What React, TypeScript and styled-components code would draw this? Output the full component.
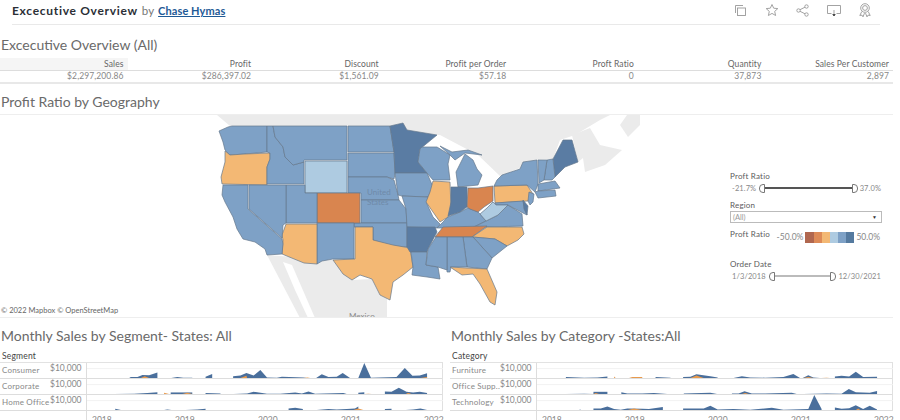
import React from "react";
import styled, { createGlobalStyle } from "styled-components";

const Global = createGlobalStyle`
  html, body { margin: 0; padding: 0; background: #fff; }
  body { font-family: "Lato", "Liberation Sans", sans-serif; color: #666; }
`;
const Page = styled.div`width: 900px; height: 420px; overflow: hidden; position: relative;`;
const Header = styled.header`
  height: 24px; margin: 0 20px 0 12px; border-bottom: 1px solid #e9e9e9;
  display: flex; align-items: center; justify-content: space-between;
`;
const Byline = styled.div`font-size: 11.5px; color: #777; display: flex; gap: 4px; align-items: baseline; padding-bottom: 3px;`;
const Name = styled.strong`font-size: 12px; color: #2b2f36; font-weight: 700; letter-spacing: 0.7px;`;
const Author = styled.a`color: #1f5a96; text-decoration: underline; font-weight: 700; font-size: 11px; letter-spacing: 0.1px;`;
const Tools = styled.div`display: flex; gap: 15px; padding-right: 7px; padding-bottom: 4px;`;
const Body = styled.main`width: 893px;`;
const Title = styled.h2`
  margin: 0; font-size: 14px; line-height: 19px; font-weight: 400; color: #6a6a6a; padding-left: 1px;
`;
const OverviewTitle = styled(Title)`padding-top: 10px; padding-bottom: 4px;`;
const GeoTitle = styled(Title)`padding-top: 8px; padding-bottom: 3px; border-bottom: 1px solid #eee;`;
const Metrics = styled.div`
  display: grid; grid-template-columns: repeat(7, 1fr); font-size: 8.5px; line-height: 11px; text-align: right;
  letter-spacing: 0.1px;
`;
const MetricHead = styled.div`
  padding-right: 4px; height: 12px; line-height: 13px; color: #666; border-bottom: 1px solid #ddd;
  background: ${(p: { $shade?: boolean }) => (p.$shade ? "#f5f5f5" : "#fff")};
`;
const MetricValue = styled.div`padding-right: 4px; height: 11px; color: #888; border-bottom: 2px solid #e8e8e8;`;
const MapPanel = styled.section`
  height: 202px; display: flex; position: relative; border-bottom: 1px solid #eee;
`;
const MapSvg = styled.svg`width: 725px; height: 202px; display: block; flex: none;`;
const Attribution = styled.div`position: absolute; left: 1px; bottom: 1px; font-size: 7.5px; line-height: 10px; color: #666;`;
const Legend = styled.aside`
  flex: 1; padding: 56px 11px 0 5px; display: flex; flex-direction: column; font-size: 8.5px; color: #666; line-height: 11px;
`;
const LegendLabel = styled.div`color: #5c5c5c; font-size: 8px; letter-spacing: 0.2px;`;
const SliderRow = styled.div`
  display: flex; align-items: center; justify-content: space-between; height: 12px; color: #888; margin-bottom: 6px;
  padding: 0 1px 0 2px; font-size: 7.5px; letter-spacing: 0.1px;
`;
const Track = styled.div`
  flex: 1; position: relative; height: 2px;
  background: ${(p: { $dark?: boolean }) => (p.$dark ? "#555" : "#bbb")}; margin: 0 8px 0 9px;
`;
const Thumb = styled.span`
  position: absolute; top: -3px; width: 4px; height: 7px; background: #fff; border: 1px solid #777;
  ${(p: { $end?: boolean }) => (p.$end
    ? "right: -6px; border-radius: 0 4px 4px 0;"
    : "left: -6px; border-radius: 4px 0 0 4px;")}
`;
const Select = styled.div`
  height: 10px; border: 1px solid #bbb; padding: 0 4px 0 2px; margin: 0 0 6px 0; color: #999; display: flex;
  align-items: center; justify-content: space-between; font-size: 7.5px;
`;
const Caret = styled.span`font-size: 5px; color: #333;`;
const RampRow = styled.div`display: flex; align-items: center; height: 17px; margin-bottom: 13px; padding-right: 2px; color: #888;`;
const RampLabel = styled(LegendLabel)`flex: 1; align-self: flex-start;`;
const Ramp = styled.div`display: flex; width: 49px; height: 11px; margin: 0 2px;`;
const RampCell = styled.span`flex: 1; background: ${(p: { $c: string }) => p.$c};`;
const ChartGrid = styled.div`display: grid; grid-template-columns: 443px 443px; column-gap: 7px; padding-top: 8px;`;
const ChartPanel = styled.section`display: flex; flex-direction: column;`;
const ChartTitle = styled(Title)`padding-bottom: 6px;`;
const FieldLabel = styled.div`font-size: 8.5px; line-height: 11px; color: #444; padding-left: 2px; height: 11px; letter-spacing: 0.2px;`;
const Rows = styled.div`border-top: 1px solid #e2e2e2; border-right: 1px solid #e0e0e0;`;
const Row = styled.div`
  display: grid; grid-template-columns: 50px 36px 1fr; height: 16px; border-bottom: 1px solid #ddd; box-sizing: border-box;
  font-size: 8px; color: #888; line-height: 15px; letter-spacing: 0.2px;
`;
const RowLabel = styled.div`padding-left: 2px; white-space: nowrap; overflow: hidden;`;
const RowAxis = styled.div`text-align: right; padding-right: 5px; font-size: 8.5px; line-height: 11px; letter-spacing: 0;`;
const Plot = styled.svg`width: 357px; height: 15px; display: block; border-left: 1px solid #ddd; box-sizing: border-box;`;
const Years = styled.div`
  display: flex; margin-left: 86px; border-left: 1px solid #ddd; padding: 4px 0 0 5px; font-size: 8.5px; color: #888; line-height: 11px;
`;
const Year = styled.span`flex: none; width: 83px;`;

type Pt = [number, number];
type Series = { blue: Pt[][]; orange: Pt[][] };

const path = (pts: Pt[], base: number) => pts.map(([x, h]) => `${x},${base - h}`).join(" ");

const AreaRow: React.FC<{ label: string; data: Series }> = ({ label, data }) => (
  <Row>
    <RowLabel>{label}</RowLabel>
    <RowAxis>$10,000</RowAxis>
    <Plot viewBox="258 0 1072 48" preserveAspectRatio="none">
      <line x1="258" x2="1330" y1="18" y2="18" stroke="#f2f2f2" strokeWidth="3" />
      {data.blue.map((s, i) => <polygon key={i} points={path(s, 48)} fill="#4a6f9c" />)}
      {data.orange.map((s, i) => <polygon key={i} points={path(s, 48)} fill="#e89a4d" />)}
    </Plot>
  </Row>
);

const Axis = () => (
  <Years>{["2018", "2019", "2020", "2021", "2022"].map((y) => <Year key={y}>{y}</Year>)}</Years>
);

const seg1: Series = {
  blue: [
    [[385,0],[390,3],[410,3],[425,10],[445,9],[470,18],[470,0]],
    [[512,0],[530,3],[548,1],[575,1],[575,0]],
    [[615,0],[615,4],[635,13],[635,0]],
    [[698,0],[698,6],[720,8],[738,16],[760,8],[780,26],[800,2],[830,1],[845,4],[910,2],[920,0]],
    [[948,0],[965,12],[985,3],[1010,4],[1028,16],[1050,0]],
    [[1075,0],[1093,48],[1113,1],[1190,3],[1215,32],[1238,7],[1260,8],[1282,15],[1282,0]],
  ],
  orange: [[[420,0],[432,6],[445,0]],[[720,0],[738,7],[740,0]],[[910,0],[922,2],[930,0]],[[1262,0],[1282,3],[1282,0]]],
};
const seg2: Series = {
  blue: [
    [[340,0],[400,1],[440,3],[470,6],[470,0]],
    [[510,0],[510,5],[575,5],[575,0]],
    [[615,0],[615,3],[660,2],[660,0]],
    [[700,0],[740,2],[760,7],[800,1],[840,1],[885,5],[905,2],[925,8],[945,1],[1030,3],[1040,0]],
    [[1075,0],[1075,4],[1093,6],[1093,0]],
    [[1155,0],[1155,8],[1175,7],[1197,20],[1220,7],[1240,5],[1260,7],[1282,3],[1282,0]],
  ],
  orange: [[[490,0],[490,4],[505,0]],[[545,0],[560,4],[575,0]],[[1095,0],[1105,1],[1115,0]],[[1218,0],[1225,4],[1235,0]]],
};
const seg3: Series = {
  blue: [
    [[343,0],[343,4],[360,0]],
    [[490,0],[500,2],[512,0]],
    [[555,0],[590,2],[615,4],[615,0]],
    [[865,0],[865,5],[885,7],[908,3],[908,0]],
    [[950,0],[985,3],[1010,2],[1040,3],[1065,5],[1075,11],[1075,0]],
    [[1155,0],[1155,3],[1175,4],[1175,0]],
    [[1218,0],[1240,2],[1262,5],[1282,0]],
  ],
  orange: [[[1060,0],[1075,5],[1090,0]]],
};
const cat1: Series = {
  blue: [
    [[345,0],[345,3],[400,1],[440,2],[470,5],[470,0]],
    [[615,0],[615,3],[660,1],[660,0]],
    [[698,0],[698,3],[720,4],[738,12],[780,6],[802,2],[802,0]],
    [[850,0],[875,6],[900,2],[945,1],[1000,3],[1030,13],[1050,0]],
    [[1058,0],[1075,9],[1090,2],[1110,0]],
    [[1155,0],[1155,5],[1175,7],[1198,5],[1218,20],[1240,3],[1282,4],[1282,0]],
  ],
  orange: [[[490,0],[490,5],[495,0]],[[535,0],[545,3],[575,3],[575,0]],[[720,0],[738,8],[760,0]],[[1060,0],[1075,3],[1090,0]],[[1115,0],[1130,1],[1140,0]]],
};
const cat2: Series = {
  blue: [
    [[345,0],[400,1],[428,0]],
    [[428,0],[428,7],[470,7],[470,0]],
    [[512,0],[512,6],[530,2],[575,2],[610,3],[650,0]],
    [[700,0],[700,2],[780,4],[800,0]],
    [[845,0],[845,2],[865,2],[883,9],[905,2],[945,2],[1025,4],[1040,0]],
    [[1060,0],[1130,2],[1175,1],[1197,16],[1218,6],[1260,4],[1282,10],[1282,0]],
  ],
  orange: [[[428,0],[435,3],[445,0]],[[875,0],[885,3],[895,0]]],
};
const cat3: Series = {
  blue: [
    [[385,0],[388,2],[390,0]],
    [[428,0],[428,5],[450,5],[470,11],[490,3],[510,1],[530,5],[575,4],[595,3],[637,10],[637,0]],
    [[698,0],[698,5],[760,5],[780,14],[802,2],[850,3],[900,1],[965,7],[1000,1],[1075,3],[1093,48],[1115,3],[1115,0]],
    [[1155,0],[1155,8],[1175,4],[1198,6],[1218,15],[1240,3],[1260,14],[1282,2],[1282,0]],
  ],
  orange: [[[532,0],[550,5],[575,0]],[[1218,0],[1225,5],[1232,0]]],
};

const BLUE = "#7ea1c6", DARK = "#5a7ca3", PALE = "#aecbe1", SAND = "#f3b874", RUST = "#d9854f";

const states: [string, string][] = [
  ["WA", "219,131 228,127 232,126 267,126 267,152 245,154 230,155 225,150 223,142"],
  ["OR", "225,151 230,155 245,154 270,153 270,159 267,167 267,185 222,184 221,177 225,162"],
  ["ID", "267,126 273,126 275,137 283,147 285,157 293,165 304,162 304,184 267,184 267,167 270,159 270,153 267,152"],
  ["MT", "273,126 347,126 347,160 304,160 304,162 293,165 285,157 283,147 275,137"],
  ["WY", "305,161 347,161 347,193 305,193"],
  ["ND", "348,126 390,126 394,152 348,152"],
  ["SD", "348,153 394,153 395,174 394,179 387,177 348,177"],
  ["NE", "348,177 387,177 394,180 398,195 399,200 361,200 361,193 348,193"],
  ["KS", "361,200 399,200 406,209 407,223 361,223"],
  ["OK", "354,223 407,223 407,247 393,246 373,240 373,227 354,227"],
  ["CO", "317,193 360,193 360,223 317,223"],
  ["NM", "317,223 354,223 354,259 333,259 322,261 317,264"],
  ["AZ", "286,224 317,224 317,264 304,263 282,254 283,240 282,235"],
  ["UT", "286,185 305,185 305,193 317,193 317,223 286,223"],
  ["NV", "249,185 286,185 286,223 283,225 282,238 249,209"],
  ["CA", "223,185 248,185 248,209 282,239 283,244 282,254 267,255 265,249 255,242 243,239 237,229 233,217 225,202 222,195"],
  ["TX", "355,227 373,227 373,240 393,245 410,248 413,267 403,275 393,282 390,300 380,295 372,279 360,275 352,280 343,274 333,260 355,259"],
  ["MN", "390,126 403,123 407,130 437,135 420,149 418,162 427,173 395,173 394,152"],
  ["IA", "395,173 427,173 433,187 428,197 402,196 398,195"],
  ["MO", "402,196 428,197 427,204 433,217 440,224 437,228 407,227 406,209"],
  ["AR", "407,227 435,227 437,232 428,249 427,252 410,252 407,247"],
  ["LA", "411,252 427,252 426,265 438,267 440,279 427,277 412,275 413,267"],
  ["WI", "422,147 437,147 450,155 448,164 450,180 433,180 427,173 418,162 420,149"],
  ["IL", "433,181 450,182 451,209 448,217 440,222 433,212 426,202 430,192"],
  ["MI", "458,187 456,172 465,154 473,160 477,169 482,175 478,185"],
  ["UP", "440,146 452,152 468,150 482,155 465,153 455,160 450,155"],
  ["KY", "437,228 448,217 460,212 468,208 478,212 481,215 486,221 472,228"],
  ["IN", "451,187 467,187 467,207 460,212 448,216 451,202"],
  ["OH", "468,188 478,188 493,186 493,201 484,207 478,212 470,209 467,207"],
  ["PA", "494,186 527,185 533,194 528,201 495,203"],
  ["NY", "502,175 520,169 523,162 537,160 538,184 535,192 527,185 494,186 497,180"],
  ["ME", "553,159 563,140 572,140 578,162 565,167 555,177"],
  ["NH", "547,160 553,159 555,177 552,180 544,180"],
  ["VT", "538,160 547,160 544,180 539,183"],
  ["MA", "538,184 555,181 560,188 538,191"],
  ["CT", "535,192 538,191 555,190 556,196 538,198"],
  ["NJ", "529,192 534,194 533,202 530,205 528,201"],
  ["VA", "472,228 486,221 498,215 508,205 522,214 523,226 487,227"],
  ["MD", "495,203 523,201 527,215 521,212 508,205 496,205"],
  ["DE", "523,200 528,206 527,215 524,209"],
  ["WV", "480,214 487,208 493,202 496,205 508,205 498,215 486,221"],
  ["TN", "435,237 443,227 487,226 472,237"],
  ["NC", "487,227 522,227 524,234 518,240 507,246 495,239 472,237"],
  ["SC", "473,237 495,239 507,246 492,258 482,247"],
  ["GA", "463,237 473,237 482,247 492,258 487,269 467,267"],
  ["AL", "447,237 463,237 467,267 451,267 450,272 447,272"],
  ["MS", "436,237 447,237 447,270 438,267 426,265 428,249"],
  ["FL", "450,267 467,268 487,269 497,292 495,305 490,302 480,284 473,274 462,275"],
];

const fillFor: Record<string, string> = {
  OR: SAND, AZ: SAND, TX: SAND, IL: SAND, PA: SAND, NC: SAND, FL: SAND,
  CO: RUST, OH: RUST, TN: RUST,
  WY: PALE, WV: PALE,
  MN: DARK, AR: DARK, IN: DARK, ME: DARK, DE: DARK,
};

const LAND = "#ebebeb";
const USMap = () => (
  <MapSvg viewBox="0 115 725 202">
    <polygon fill={LAND} points="217,115 610,115 600,120 575,135 560,140 553,159 537,160 520,168 500,176 478,155 440,135 437,135 407,130 403,123 390,126 230,126" />
    <polygon fill={LAND} points="572,135 590,128 600,145 622,150 605,165 585,172 583,158 578,162" />
    <polygon fill={LAND} points="627,115 640,115 640,125 628,137 620,125" />
    <polygon fill={LAND} points="267,255 333,260 352,280 372,279 380,295 387,299 387,318 300,318" />
    <polygon fill="#fff" points="283,262 292,265 305,295 315,318 308,318 295,290" />
    {states.map(([id, pts]) => (
      <polygon key={id} points={pts} fill={fillFor[id] ?? BLUE} stroke="#66788c" strokeWidth="0.7" strokeLinejoin="round" />
    ))}
    <text x="367" y="195" fontSize="8" fill="#6f8aa9" fontFamily="Lato">United</text>
    <text x="367" y="205" fontSize="8" fill="#6f8aa9" fontFamily="Lato">States</text>
    <text x="349" y="319" fontSize="8" fill="#888" fontFamily="Lato">Mexico</text>
  </MapSvg>
);

const stroke = { fill: "none", stroke: "#999", strokeWidth: 0.9 } as const;
const Icon: React.FC<{ children: React.ReactNode }> = ({ children }) => (
  <svg width="16" height="16" viewBox="0 0 16 16" {...stroke}>{children}</svg>
);

const metrics = [
  ["Sales", "$2,297,200.86"], ["Profit", "$286,397.02"], ["Discount", "$1,561.09"], ["Profit per Order", "$57.18"],
  ["Proft Ratio", "0"], ["Quantity", "37,873"], ["Sales Per Customer", "2,897"],
];
const ramp = ["#b0674f", "#dd8a57", "#f3b874", "#aecbe1", "#7ea1c6", "#557a9f"];

export default function App() {
  return (
    <Page>
      <Global />
      <Header>
        <Byline><Name>Excecutive Overview</Name> by <Author>Chase Hymas</Author></Byline>
        <Tools>
          <Icon><path d="M2.500 11V3.500H10" /><rect x="4.500" y="6" width="8" height="7.500" /></Icon>
          <Icon><path d="M8 2.500l1.700 3.700 4.100.4-3.100 2.800.9 4.100L8 11.400l-3.600 2.100.9-4.100-3.100-2.800 4.100-.4z" /></Icon>
          <Icon><circle cx="3.500" cy="8.500" r="1.700" /><circle cx="11.500" cy="4.500" r="1.700" /><circle cx="11.500" cy="12.500" r="1.700" /><path d="M5 7.700l5-2.500M5 9.300l5 2.500" /></Icon>
          <Icon><path d="M5.500 11.500H1.500v-8h13v8H10.500" /><path d="M8 8v5" /><path d="M6.800 12.500l1.200 1.500 1.200-1.500z" fill="#444" stroke="#444" /></Icon>
          <Icon><circle cx="8" cy="6" r="4.300" /><circle cx="8" cy="6" r="2.400" /><path d="M4.800 9.500l-2 4 2.200-.4 1 1.800 1.500-3.800M11.200 9.500l2 4-2.200-.4-1 1.800-1.500-3.800" /></Icon>
        </Tools>
      </Header>
      <Body>
        <OverviewTitle>Excecutive Overview (All)</OverviewTitle>
        <Metrics>
          {metrics.map(([h], i) => <MetricHead key={h} $shade={i === 0}>{h}</MetricHead>)}
          {metrics.map(([h, v]) => <MetricValue key={h}>{v}</MetricValue>)}
        </Metrics>
        <GeoTitle>Profit Ratio by Geography</GeoTitle>
        <MapPanel>
          <USMap />
          <Attribution>© 2022 Mapbox © OpenStreetMap</Attribution>
          <Legend>
            <LegendLabel>Proft Ratio</LegendLabel>
            <SliderRow>-21.7%<Track $dark><Thumb /><Thumb $end /></Track>37.0%</SliderRow>
            <LegendLabel>Region</LegendLabel>
            <Select>(All)<Caret>▼</Caret></Select>
            <RampRow>
              <RampLabel>Proft Ratio</RampLabel>
              -50.0%
              <Ramp>{ramp.map((c) => <RampCell key={c} $c={c} />)}</Ramp>
              50.0%
            </RampRow>
            <LegendLabel>Order Date</LegendLabel>
            <SliderRow>1/3/2018<Track><Thumb /><Thumb $end /></Track>12/30/2021</SliderRow>
          </Legend>
        </MapPanel>
        <ChartGrid>
          <ChartPanel>
            <ChartTitle>Monthly Sales by Segment- States: All</ChartTitle>
            <FieldLabel>Segment</FieldLabel>
            <Rows>
              <AreaRow label="Consumer" data={seg1} />
              <AreaRow label="Corporate" data={seg2} />
              <AreaRow label="Home Office" data={seg3} />
            </Rows>
            <Axis />
          </ChartPanel>
          <ChartPanel>
            <ChartTitle>Monthly Sales by Category -States:All</ChartTitle>
            <FieldLabel>Category</FieldLabel>
            <Rows>
              <AreaRow label="Furniture" data={cat1} />
              <AreaRow label="Office Supp.." data={cat2} />
              <AreaRow label="Technology" data={cat3} />
            </Rows>
            <Axis />
          </ChartPanel>
        </ChartGrid>
      </Body>
    </Page>
  );
}
